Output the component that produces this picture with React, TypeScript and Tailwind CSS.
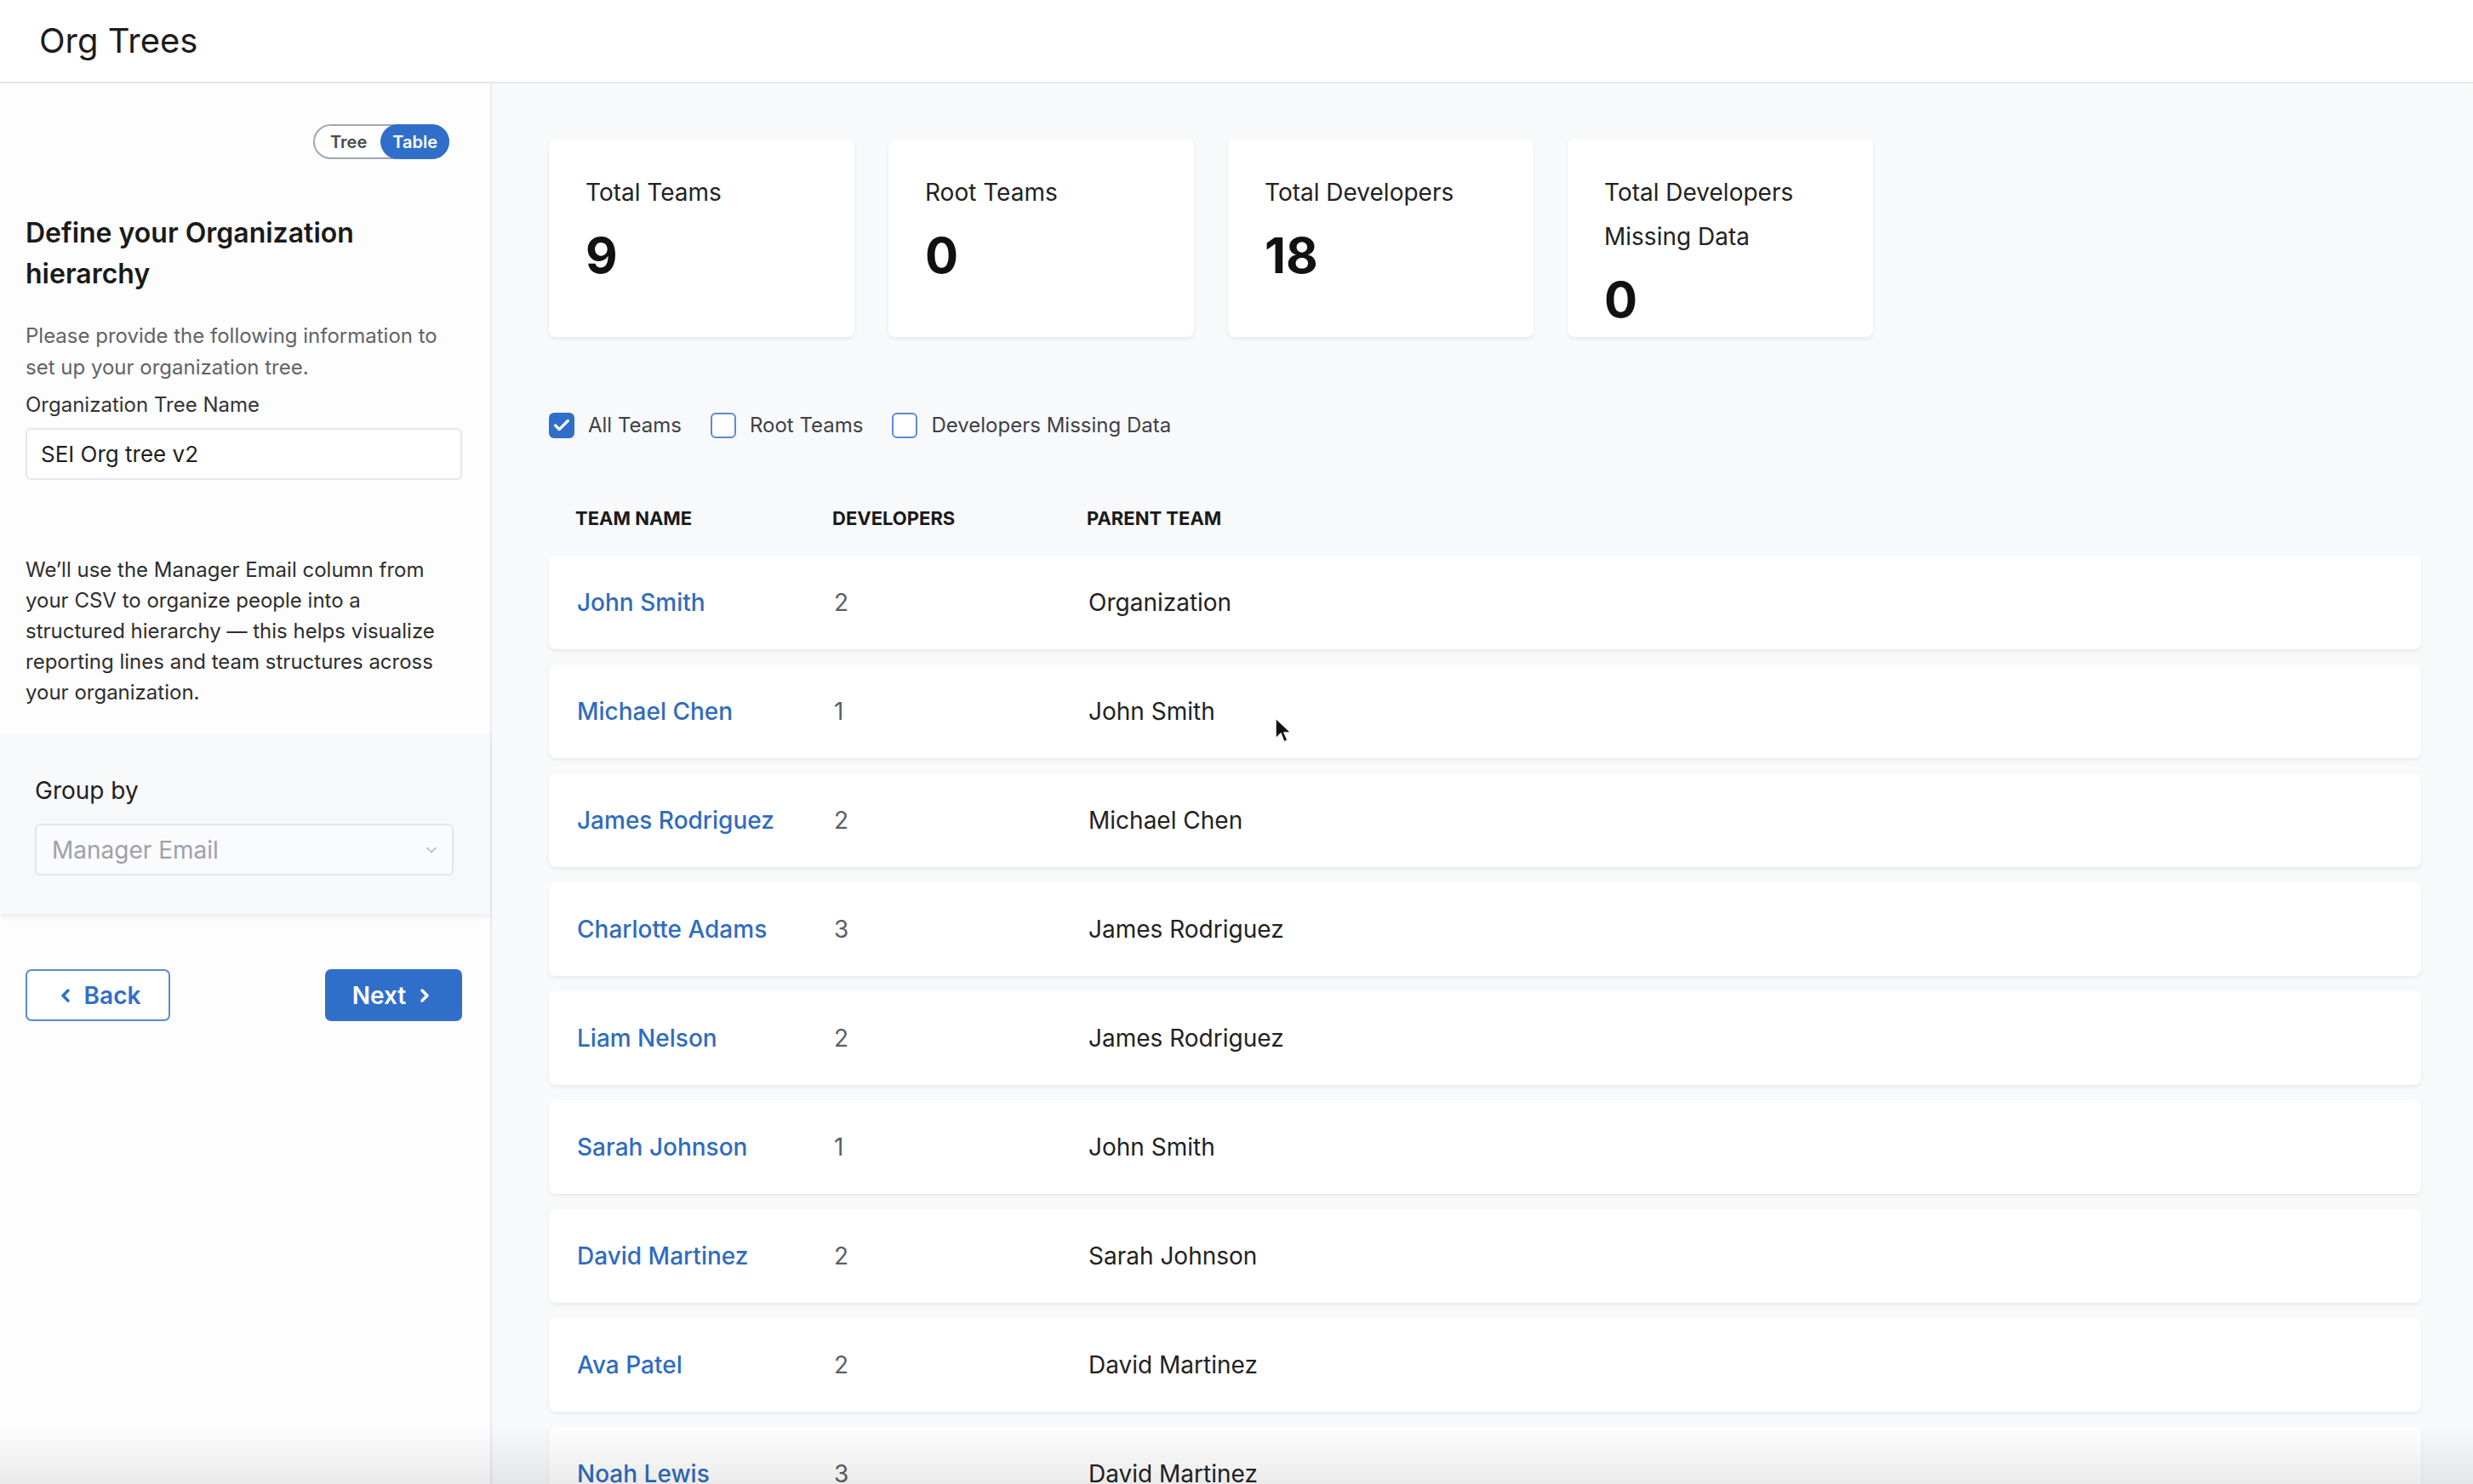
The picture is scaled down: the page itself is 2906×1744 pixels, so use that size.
import { Check, ChevronDown, ChevronLeft, ChevronRight } from 'lucide-react'

const stats = [
  { label: 'Total Teams', value: '9' },
  { label: 'Root Teams', value: '0' },
  { label: 'Total Developers', value: '18' },
  { label: 'Total Developers Missing Data', value: '0' },
]

const teams = [
  { name: 'John Smith', devs: 2, parent: 'Organization' },
  { name: 'Michael Chen', devs: 1, parent: 'John Smith' },
  { name: 'James Rodriguez', devs: 2, parent: 'Michael Chen' },
  { name: 'Charlotte Adams', devs: 3, parent: 'James Rodriguez' },
  { name: 'Liam Nelson', devs: 2, parent: 'James Rodriguez' },
  { name: 'Sarah Johnson', devs: 1, parent: 'John Smith' },
  { name: 'David Martinez', devs: 2, parent: 'Sarah Johnson' },
  { name: 'Ava Patel', devs: 2, parent: 'David Martinez' },
  { name: 'Noah Lewis', devs: 3, parent: 'David Martinez' },
]

function Checkbox({ checked, label }: { checked?: boolean; label: string }) {
  return (
    <label className="flex items-center gap-[16px]">
      {checked ? (
        <span className="w-[30px] h-[30px] rounded-[6px] bg-[#2f6fca] flex items-center justify-center">
          <Check className="w-[22px] h-[22px] text-white" strokeWidth={3.5} />
        </span>
      ) : (
        <span className="w-[30px] h-[30px] rounded-[6px] border-2 border-[#5a8bd3] bg-white" />
      )}
      <span className="text-[24px] leading-[30px] text-[#3f3f46]">{label}</span>
    </label>
  )
}

export default function App() {
  return (
    <div
      className="relative h-screen overflow-hidden bg-white text-[#1f1f1f]"
      style={{ fontFamily: 'Inter, "Noto Sans", sans-serif' }}
    >
      {/* Header */}
      <header className="h-[98px] border-b-2 border-[#e4e6ea] bg-white flex items-center pl-[46px]">
        <h1 className="text-[40px] text-[#1c1c1c]">Org Trees</h1>
      </header>

      <div className="flex h-[calc(100%-98px)]">
        {/* Sidebar */}
        <aside className="w-[578px] shrink-0 border-r-2 border-[#e8eaee] bg-[#fdfdfd] flex flex-col">
          <div className="px-[30px] pr-[33px]">
            <div className="flex justify-end mt-[48px] pr-[15px]">
              <div className="flex items-center h-[41px] rounded-full border-2 border-[#a3a6ad] bg-white">
                <span className="pl-[18px] pr-[16px] text-[20px] font-semibold text-[#4b4b4b]">Tree</span>
                <span className="h-[41px] -my-[2px] -mr-[2px] px-[14px] rounded-full bg-[#2f6fca] text-white text-[20px] font-semibold flex items-center">
                  Table
                </span>
              </div>
            </div>

            <h2 className="mt-[63px] text-[32px] leading-[48px] font-semibold text-[#1a1a1a]">
              Define your Organization hierarchy
            </h2>
            <p className="mt-[30px] text-[24px] leading-[37px] text-[#5f6368]">
              Please provide the following information to set up your organization tree.
            </p>
            <p className="mt-[7px] text-[24px] leading-[37px] text-[#333]">Organization Tree Name</p>
            <div className="mt-[9px] h-[61px] rounded-[6px] border-2 border-[#e4e6ea] bg-white flex items-center px-[16px]">
              <span className="text-[26px] text-[#1f1f1f]">SEI Org tree v2</span>
            </div>

            <p className="mt-[88px] text-[24px] leading-[36px] text-[#2e2e2e]">
              We’ll use the Manager Email column from your CSV to organize people into a structured
              hierarchy — this helps visualize reporting lines and team structures across your
              organization.
            </p>
          </div>

          <div className="mt-[31px] bg-[#f7f8fa] pt-[46px] pb-[45px] pl-[41px] pr-[43px] shadow-[0_4px_6px_rgba(0,0,0,0.06)]">
            <p className="text-[28px] leading-[40px] text-[#1f1f1f]">Group by</p>
            <div className="mt-[19px] h-[61px] rounded-[6px] border-2 border-[#e3e5e9] bg-[#fafbfc] flex items-center justify-between pl-[18px] pr-[14px]">
              <span className="text-[28px] text-[#9ea1aa]">Manager Email</span>
              <ChevronDown className="w-[20px] h-[20px] text-[#b5b8bf]" strokeWidth={2} />
            </div>
          </div>

          <div className="mt-[65px] px-[30px] pr-[33px] flex justify-between">
            <button className="h-[61px] w-[170px] rounded-[7px] border-2 border-[#5a8bd3] bg-white flex items-center justify-center gap-[10px] text-[#2f6fca] text-[28px] font-semibold">
              <ChevronLeft className="w-[24px] h-[24px]" strokeWidth={3.5} />
              Back
            </button>
            <button className="h-[61px] w-[161px] rounded-[7px] bg-[#2f6fca] flex items-center justify-center gap-[10px] text-white text-[28px] font-semibold">
              Next
              <ChevronRight className="w-[24px] h-[24px]" strokeWidth={3.5} />
            </button>
          </div>
        </aside>

        {/* Main */}
        <main className="flex-1 bg-[#f8f9fb] pt-[65px] pl-[67px] pr-[61px]">
          <div className="flex gap-[40px]">
            {stats.map(s => (
              <div
                key={s.label}
                className="w-[359px] rounded-[8px] bg-white shadow-[0_2px_5px_rgba(0,0,0,0.07)] pl-[43px] pr-[30px] pt-[37px] pb-[2px]"
              >
                <p className="text-[28px] leading-[52px] text-[#222]">{s.label}</p>
                <p className="mt-[6px] text-[58px] leading-[84px] font-bold text-[#111]">{s.value}</p>
              </div>
            ))}
          </div>

          <div className="mt-[89px] flex items-center gap-[34px]">
            <Checkbox checked label="All Teams" />
            <Checkbox label="Root Teams" />
            <Checkbox label="Developers Missing Data" />
          </div>

          <div className="mt-[79px] grid grid-cols-[302px_299px_1fr] pl-[31px] text-[22px] leading-[30px] font-bold text-[#1a1a1a]">
            <span>TEAM NAME</span>
            <span>DEVELOPERS</span>
            <span>PARENT TEAM</span>
          </div>

          <div className="mt-[29px] flex flex-col gap-[18px]">
            {teams.map(t => (
              <div
                key={t.name}
                className="h-[110px] shrink-0 rounded-[8px] bg-white shadow-[0_2px_4px_rgba(0,0,0,0.07)] grid grid-cols-[302px_299px_1fr] items-center pl-[33px] text-[28px]"
              >
                <span className="font-medium text-[#2f6cbf]">{t.name}</span>
                <span className="text-[#5b5e66]">{t.devs}</span>
                <span className="text-[#222]">{t.parent}</span>
              </div>
            ))}
          </div>
        </main>
      </div>

      {/* mouse pointer */}
      <svg className="absolute left-[1497px] top-[842px] w-[22px] h-[32px]" viewBox="0 0 22 32">
        <path d="M2 2 L2 26 L8 20 L12 30 L16 28 L12 19 L20 19 Z" fill="#111" stroke="#fff" strokeWidth="1.5" />
      </svg>

      {/* bottom fade of the capture */}
      <div className="pointer-events-none absolute left-0 right-0 bottom-0 h-[70px] bg-gradient-to-b from-transparent to-[rgba(0,0,0,0.08)]" />
    </div>
  )
}
